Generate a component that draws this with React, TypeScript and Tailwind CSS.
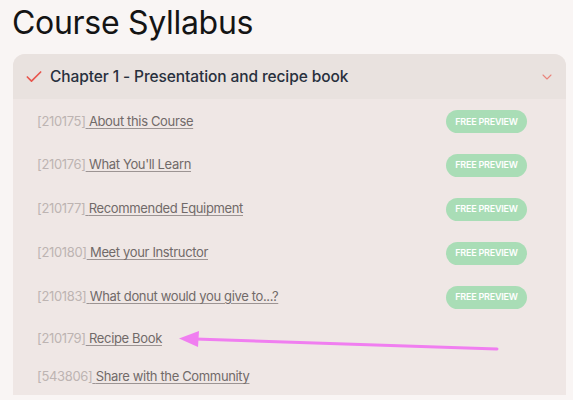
import { Check, ChevronDown } from "lucide-react";

type Lesson = {
  id: string;
  title: string;
  preview: boolean;
  rowClass: string;
};

const LESSONS: Lesson[] = [
  { id: "210175", title: "About this Course", preview: true, rowClass: "h-[43px]" },
  { id: "210176", title: "What You'll Learn", preview: true, rowClass: "h-[44px]" },
  { id: "210177", title: "Recommended Equipment", preview: true, rowClass: "h-[44px]" },
  { id: "210180", title: "Meet your Instructor", preview: true, rowClass: "h-[44px]" },
  { id: "210183", title: "What donut would you give to...?", preview: true, rowClass: "h-[44px]" },
  { id: "210179", title: "Recipe Book", preview: false, rowClass: "h-[40px]" },
  { id: "543806", title: "Share with the Community", preview: false, rowClass: "h-[36px]" },
];

export default function App() {
  return (
    <div className="min-h-[400px] w-[573px] overflow-hidden bg-[#f9f5f4] [font-family:Inter,'Noto_Sans',sans-serif]">
      <h1 className="pl-[12px] pt-[3px] text-[32px] leading-[40px] tracking-[-0.3px] text-[#141414]">Course Syllabus</h1>

      <section className="relative ml-[13px] mr-[7px] mt-[11px] overflow-hidden rounded-t-[12px] bg-[#efe7e5]">
        <div className="flex h-[45px] items-center bg-[#e9e2df] pl-[11px] pr-[11px] pt-[1px]">
          <Check className="size-[20px] text-[#e8574f]" strokeWidth={2} />
          <h2 className="ml-[6px] text-[15.5px] font-medium tracking-[-0.1px] text-[#28303d]">
            Chapter 1 - Presentation and recipe book
          </h2>
          <ChevronDown className="ml-auto size-[16px] text-[#e9847c]" strokeWidth={1.6} />
        </div>

        <ul className="pl-[24px] pr-[39px] pt-[1px]">
          {LESSONS.map((lesson) => (
            <li key={lesson.id} className={`flex items-center justify-between text-[13px] tracking-[-0.35px] ${lesson.rowClass}`}>
              <span>
                <span className="text-[#bdb4b2]">[{lesson.id}]</span>
                <span className="text-[#716a69] underline decoration-[#9c9493] underline-offset-[2px]"> {lesson.title}</span>
              </span>
              {lesson.preview ? (
                <span className="flex h-[23px] w-[81px] items-center justify-center rounded-full bg-[#a9ddb6] text-[9px] font-semibold tracking-[-0.2px] text-white">
                  FREE PREVIEW
                </span>
              ) : null}
            </li>
          ))}
        </ul>

        {/* annotation arrow over the list */}
        <svg
          className="pointer-events-none absolute left-[160px] top-[275px]"
          width="330"
          height="30"
          viewBox="0 0 330 30"
        >
          <line x1="324" y1="20" x2="22" y2="10" stroke="#f07ef0" strokeWidth="3" strokeLinecap="round" />
          <polygon points="6,9.5 26,2 25,18" fill="#f07ef0" />
        </svg>
      </section>
    </div>
  );
}
